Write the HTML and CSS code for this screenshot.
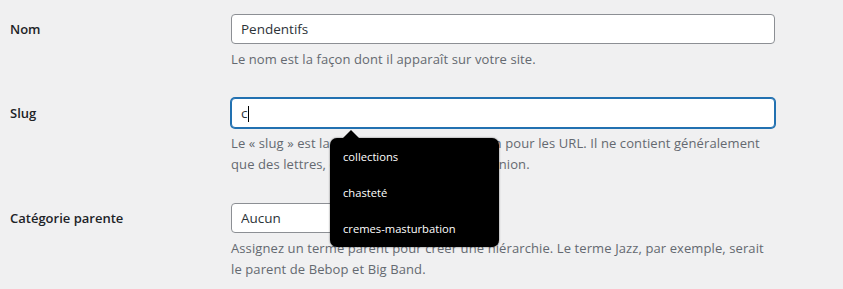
FILE: index.html
```html
<!DOCTYPE html>
<html lang="fr">
<head>
  <meta charset="UTF-8">
  <meta name="viewport" content="width=device-width, initial-scale=1.0">
  <title>Modifier la catégorie</title>
  <link rel="stylesheet" href="styles.css">
</head>
<body>

  <div class="form-table">
    <div class="form-row">
      <label class="form-row__label" for="tag-name">Nom</label>
      <div class="form-row__field">
        <input class="text-input" id="tag-name" type="text" value="Pendentifs">
        <p class="description">Le nom est la façon dont il apparaît sur votre site.</p>
      </div>
    </div>

    <div class="form-row">
      <label class="form-row__label">Slug</label>
      <div class="form-row__field">
        <div class="text-input text-input--focus">c<span class="caret"></span></div>
        <p class="description">
          Le « slug » est la version normalisée du nom pour les URL. Il ne contient généralement<br>
          que des lettres, des chiffres et des traits d’union.
        </p>

        <!-- suggestions popup over the description -->
        <ul class="suggestions">
          <li class="suggestions__item">collections</li>
          <li class="suggestions__item">chasteté</li>
          <li class="suggestions__item">cremes-masturbation</li>
        </ul>
      </div>
    </div>

    <div class="form-row">
      <label class="form-row__label" for="parent">Catégorie parente</label>
      <div class="form-row__field">
        <select class="select-input" id="parent">
          <option>Aucun</option>
        </select>
        <p class="description">
          Assignez un terme parent pour créer une hiérarchie. Le terme Jazz, par exemple, serait<br>
          le parent de Bebop et Big Band.
        </p>
      </div>
    </div>
  </div>

</body>
</html>
```

FILE: styles.css
```css
:root {
  --clr-bg: #f0f0f1;
  --clr-text: #1d2327;
  --clr-input-text: #2c3338;
  --clr-muted: #646970;
  --clr-border: #8c8f94;
  --clr-focus: #2271b1;

  font-family: "Open Sans", "Segoe UI", "Liberation Sans", sans-serif;
  font-size: 14px;
}

* {
  box-sizing: border-box;
}

body {
  margin: 0;
  padding: 0;
  background: var(--clr-bg);
  color: var(--clr-text);
}

.form-table {
  padding: 0 0 0 10px;
}

.form-row {
  display: grid;
  grid-template-columns: 221px 544px;
  padding: 14px 0;
}

.form-row__label {
  font-weight: 600;
  font-size: 13px;
  line-height: 30px;
  color: var(--clr-text);
}

.form-row__field {
  position: relative;
}

.text-input,
.select-input {
  display: block;
  height: 30px;
  margin: 0;
  padding: 0 9px;
  font: inherit;
  font-size: 13.5px;
  line-height: 28px;
  color: var(--clr-input-text);
  background: #fff;
  border: 1px solid var(--clr-border);
  border-radius: 4px;
}

.text-input {
  width: 544px;
}

.text-input--focus {
  border-color: var(--clr-focus);
  box-shadow: 0 0 0 1px var(--clr-focus);
}

.caret {
  display: inline-block;
  width: 1px;
  height: 16px;
  margin-left: 1px;
  vertical-align: -4px;
  background: #000;
}

.select-input {
  width: 200px;
  appearance: none;
}

.description {
  width: 600px;
  margin: 5px 0 0;
  font-size: 13px;
  line-height: 21px;
  letter-spacing: 0.1px;
  color: var(--clr-muted);
}

.suggestions {
  position: absolute;
  z-index: 10;
  top: 40px;
  left: 99px;
  width: 169px;
  margin: 0;
  padding: 1px 0 0;
  list-style: none;
  background: #000;
  border-radius: 7px;
  box-shadow: 0 0 2px rgba(0, 0, 0, 0.6);
}

.suggestions::before {
  content: '';
  position: absolute;
  top: -8px;
  left: 13px;
  border-left: 8px solid transparent;
  border-right: 8px solid transparent;
  border-bottom: 8px solid #000;
}

.suggestions__item {
  height: 36px;
  padding-left: 13px;
  font-size: 11.2px;
  line-height: 36px;
  color: #fff;
}
```
